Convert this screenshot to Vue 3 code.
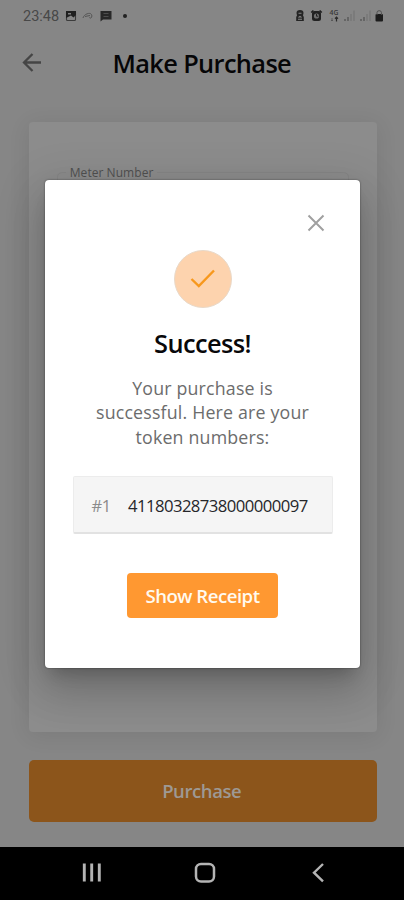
<script setup>
const title = 'Make Purchase'
const tokens = ['41180328738000000097']
</script>

<template>
  <div class="phone">
    <div class="app-screen">
      <div class="status">
        <div class="status-left">
          <span class="clock">23:48</span>
          <svg class="st-img" width="12" height="12" viewBox="0 0 12 12">
            <rect x="1.500" y="1.500" width="9" height="9" rx="1" fill="none" stroke="#3c3c3c" stroke-width="1.100" />
            <path d="M1 1h10v4L8.500 7.500 6 5.500 1 8z" fill="#202020" />
            <path d="M3 3h3v1.500H3z" fill="#808080" />
          </svg>
          <svg class="st-swirl" width="11" height="10" viewBox="0 0 11 10">
            <path d="M1 7C2 3 8 1 9.500 3.500S8 8.500 7.500 6.500M3 5.500l5-1" fill="none" stroke="#555" stroke-width="1" />
          </svg>
          <svg class="st-chat" width="12" height="12" viewBox="0 0 12 12">
            <path d="M.5 1h11v8.500H3L.5 11.500z" fill="#282828" />
            <path d="M3.500 3.500h5M3.500 6.500h5" stroke="#585858" stroke-width=".8" />
          </svg>
          <i class="dot"></i>
        </div>
        <svg class="status-right" width="90" height="14" viewBox="0 0 90 14">
          <path d="M1.500 4Q1.500 1 5 1T8.500 4L8 6.500l.8 1.500v4H1.200V8L2 6.500z" fill="#242424" />
          <path d="M3.500 4.200h3M3.500 8.500L5 7.500l1.500 1M3 10.300h4" stroke="#858585" stroke-width="1.100" fill="none" />
          <path d="M16.200 3.500l2.200-2M26.800 3.500l-2.200-2" stroke="#222" stroke-width="1.600" />
          <rect x="17" y="2" width="9" height="10" rx="2.500" fill="#222" />
          <circle cx="21.500" cy="7" r="2.600" fill="#707070" />
          <path d="M21.500 5v2.200h1.800" stroke="#222" fill="none" />
          <text x="34.500" y="6.200" font-size="6.800" font-weight="600" fill="#393939">4G</text>
          <path d="M37 9v3M36 11l1 1 1-1" stroke="#555" fill="none" stroke-width=".9" />
          <path d="M41.500 12.500V8M40 9.700L41.500 8.200 43 9.700" stroke="#2c2c2c" fill="none" stroke-width="1.200" />
          <path d="M50 12v-2M53 12V8" stroke="#505050" stroke-width="1.200" />
          <path d="M56 12V5M59 12V1.500" stroke="#707070" stroke-width="1" />
          <path d="M66 12v-2M69 12V8" stroke="#505050" stroke-width="1.200" />
          <path d="M72 12V5M75 12V1.500" stroke="#707070" stroke-width="1" />
          <rect x="80.500" y="5" width="7.500" height="7.500" rx="1" fill="#1c1c1c" />
          <path d="M82 6V3.500q0-1.800 2.200-1.800t2.200 1.800V6" fill="none" stroke="#505050" />
        </svg>
      </div>
      <header class="header">
        <svg class="back" width="20" height="20" viewBox="0 0 20 20">
          <path d="M19 9.500H2.500M10.500 1L2 9.500l8.500 8.500" fill="none" stroke="#454545" stroke-width="2.300" />
        </svg>
        <h1>{{ title }}</h1>
      </header>
      <main class="card">
        <fieldset class="field"><legend>Meter Number</legend></fieldset>
      </main>
      <button class="purchase">Purchase</button>
    </div>
    <nav class="nav">
      <svg width="404" height="53" viewBox="0 0 404 53" fill="none" stroke="#b4b4b4">
        <path d="M84.300 16.500v18M91.700 16.500v18M99.300 16.500v18" stroke-width="2.900" />
        <rect x="196" y="17" width="18" height="17.500" rx="5" stroke-width="2.500" />
        <path d="M323 17l-9 8.700 9 8.700" stroke-width="2.400" />
      </svg>
    </nav>
    <section class="dialog">
      <svg class="close" width="18" height="18" viewBox="0 0 18 18">
        <path d="M1.500 1.500l15 15M16.500 1.500l-15 15" stroke="#a0a0a0" stroke-width="2" />
      </svg>
      <div class="check">
        <svg width="28" height="24" viewBox="0 0 28 24">
          <path d="M2.500 12l7.300 7L25 3.500" fill="none" stroke="#f7981d" stroke-width="2.400" />
        </svg>
      </div>
      <h2>Success!</h2>
      <p>Your purchase is<br />successful. Here are your<br />token numbers:</p>
      <div v-for="(token, i) in tokens" :key="token" class="token">
        <span class="index">#{{ i + 1 }}</span>
        <span class="number">{{ token }}</span>
      </div>
      <button class="receipt">Show Receipt</button>
    </section>
  </div>
</template>

<style>
body { margin: 0; background: #000; }
</style>

<style scoped>
* { box-sizing: border-box; }
.phone { position: relative; width: 404px; height: 900px; overflow: hidden; font-family: "Open Sans", "Noto Sans", sans-serif; white-space: nowrap; }
.app-screen { height: 847px; padding-left: 1.500px; background: #868686; display: flex; flex-direction: column; align-items: center; }
.status { width: 100%; height: 32px; padding: 0 19.500px 0 21.500px; display: flex; align-items: center; justify-content: space-between; }
.status-left { display: flex; align-items: center; }
.clock { width: 42px; font: 14.500px Roboto, sans-serif; color: #484848; }
.st-swirl { margin-left: 5px; }
.st-chat { margin-left: 7px; }
.dot { width: 4px; height: 4px; border-radius: 50%; background: #222; margin-left: 11px; }
.header { width: 100%; height: 62px; display: flex; align-items: center; padding-left: 20.500px; }
.back { flex: none; }
h1 { margin: 0 0 0 70.500px; font-size: 25.400px; line-height: 33px; letter-spacing: -.65px; font-weight: 600; color: #060608; }
.card { width: 348px; height: 610px; margin-top: 28px; padding: 42px 28px 0; background: #8c8c8c; border-radius: 4px; box-shadow: 0 3px 22px rgba(0, 0, 0, .09); }
.field { height: 60px; margin: 0; padding: 0 8px; border: 1px solid #868686; border-radius: 5px; }
legend { padding: 1px 4px 0; font-size: 12px; line-height: 16px; color: #505050; letter-spacing: .05px; }
.purchase { width: 348px; height: 62px; margin-top: 27.500px; padding: 0 2px 0 0; border: 0; border-radius: 5px; background: #8c551b; color: #9e9994; font: 600 18.500px "Open Sans", sans-serif; letter-spacing: -.4px; }
.nav { height: 53px; background: #000; }
.nav svg { display: block; }
.dialog { position: absolute; left: 45px; top: 179.500px; width: 315px; height: 488.500px; border-radius: 4px; background: #fff; box-shadow: 0 11px 15px -7px rgba(0, 0, 0, .2), 0 24px 38px 3px rgba(0, 0, 0, .14), 0 9px 46px 8px rgba(0, 0, 0, .1), 0 0 2px rgba(0, 0, 0, .5); display: flex; flex-direction: column; align-items: center; padding-top: 34.500px; }
.close { flex: none; align-self: flex-end; margin-right: 35px; }
.check { flex: none; width: 58px; height: 58px; margin-top: 18px; border-radius: 50%; background: #fdd3ae; border: 1px solid #e9d9c9; display: flex; align-items: center; justify-content: center; }
h2 { margin: 17.500px 0 0; font-size: 25.400px; line-height: 34px; letter-spacing: -.6px; font-weight: 600; color: #08080a; }
p { margin: 16px 0 0; text-align: center; font-size: 17.800px; line-height: 24.700px; letter-spacing: .18px; color: #6c6c6c; }
.token { flex: none; width: 260px; height: 58px; margin-top: 26.500px; padding-left: 18px; display: flex; align-items: center; background: #f5f5f5; border: 1px solid #ececec; border-bottom: 2px solid #e2e2e2; border-radius: 2px; }
.index { width: 36.500px; padding-top: 1px; font-size: 16.500px; letter-spacing: -.5px; color: #8b8b8b; }
.number { padding-top: 1px; font-size: 16.700px; letter-spacing: -.56px; color: #26262a; }
.receipt { flex: none; width: 151px; height: 45px; margin-top: 39px; padding: 0; border: 0; border-radius: 4px; background: #ff9831; color: #fffaf0; font: 600 18.600px "Open Sans", sans-serif; letter-spacing: -.5px; }
</style>
